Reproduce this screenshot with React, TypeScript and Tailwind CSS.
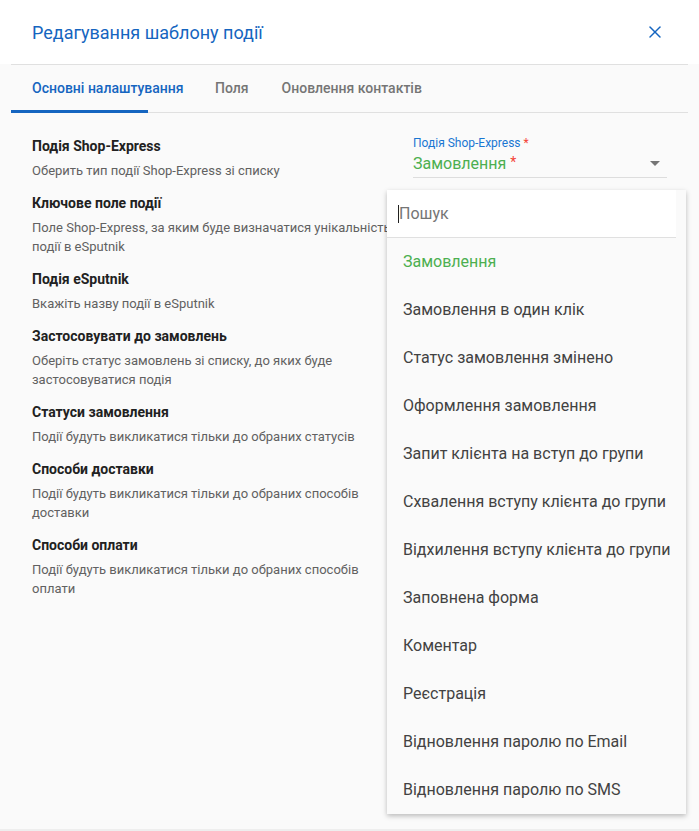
import React from 'react';
import { X } from 'lucide-react';

const settings = [
  { title: 'Подія Shop-Express', desc: 'Оберить тип події Shop-Express зі списку' },
  { title: 'Ключове поле події', desc: 'Поле Shop-Express, за яким буде визначатися унікальність події в eSputnik' },
  { title: 'Подія eSputnik', desc: 'Вкажіть назву події в eSputnik' },
  { title: 'Застосовувати до замовлень', desc: 'Оберіть статус замовлень зі списку, до яких буде застосовуватися подія' },
  { title: 'Статуси замовлення', desc: 'Події будуть викликатися тільки до обраних статусів' },
  { title: 'Способи доставки', desc: 'Події будуть викликатися тільки до обраних способів доставки' },
  { title: 'Способи оплати', desc: 'Події будуть викликатися тільки до обраних способів оплати' },
];

const options = [
  'Замовлення',
  'Замовлення в один клік',
  'Статус замовлення змінено',
  'Оформлення замовлення',
  'Запит клієнта на вступ до групи',
  'Схвалення вступу клієнта до групи',
  'Відхилення вступу клієнта до групи',
  'Заповнена форма',
  'Коментар',
  'Реєстрація',
  'Відновлення паролю по Email',
  'Відновлення паролю по SMS',
];

export default function App() {
  return (
    <div className="relative w-[699px] h-[831px] overflow-hidden bg-[#fafafa] font-['Roboto',sans-serif] flex flex-col">
      {/* Header */}
      <div className="bg-white">
        <div className="h-16 pl-8 pr-[34px] flex items-center justify-between">
          <h2 className="text-[18px] text-[#1565c0]">Редагування шаблону події</h2>
          <X className="w-[20px] h-[20px] text-[#1565c0]" strokeWidth={1.8} />
        </div>
      </div>

      {/* Tabs */}
      <div className="mx-[11px] border-t border-b border-[#e0e0e0] flex h-[49px] text-[14px] font-medium whitespace-nowrap">
        <div className="relative w-[137px] pl-[21px] flex items-center text-[#1565c0]">
          Основні налаштування
          <span className="absolute left-0 right-0 bottom-[-1px] h-[3px] bg-[#1565c0]" />
        </div>
        <div className="ml-[67px] flex items-center text-[#757575]">Поля</div>
        <div className="ml-[33px] flex items-center text-[#757575]">Оновлення контактів</div>
      </div>

      {/* Content */}
      <div className="flex-1 flex px-8 pt-[23px] border-b-2 border-[#eeeeee]">
        <div className="w-[366px] flex flex-col">
          {settings.map((s) => (
            <div key={s.title} className="mb-[13px]">
              <div className="text-[14px] leading-[20px] font-bold text-[#212121]">{s.title}</div>
              <div className="mt-[5px] text-[13px] leading-[19px] text-[#616161]">{s.desc}</div>
            </div>
          ))}
        </div>
        <div className="ml-[15px] w-[254px] flex flex-col">
          <div className="text-[12px] leading-[14px] text-[#1976d2]">
            Подія Shop-Express <span className="text-[#f44336]">*</span>
          </div>
          <div className="flex items-center justify-between h-[28px] border-b border-[#dddddd]">
            <span className="text-[16px] text-[#4caf50]">
              Замовлення <span className="text-[#f44336] text-[14px] align-top">*</span>
            </span>
            <span className="mr-[7px] w-0 h-0 border-l-[5px] border-r-[5px] border-t-[5px] border-l-transparent border-r-transparent border-t-[#757575]" />
          </div>
        </div>
      </div>

      {/* Dropdown menu */}
      <div className="absolute left-[387px] top-[190px] w-[299px] bg-[#fafafa] shadow-[0_2px_5px_rgba(0,0,0,0.26)] flex flex-col">
        <div className="w-[289px] h-[48px] bg-white border-b border-[#e0e0e0] flex items-center pl-[11px]">
          <span className="w-[1px] h-[18px] bg-[#212121]" />
          <span className="text-[16px] text-[#757575]">Пошук</span>
        </div>
        {options.map((o, i) => (
          <div
            key={o}
            className={`h-[48px] px-[16px] flex items-center text-[16px] whitespace-nowrap ${i === 0 ? 'text-[#4caf50]' : 'text-[#424242]'}`}
          >
            {o}
          </div>
        ))}
      </div>
    </div>
  );
}
